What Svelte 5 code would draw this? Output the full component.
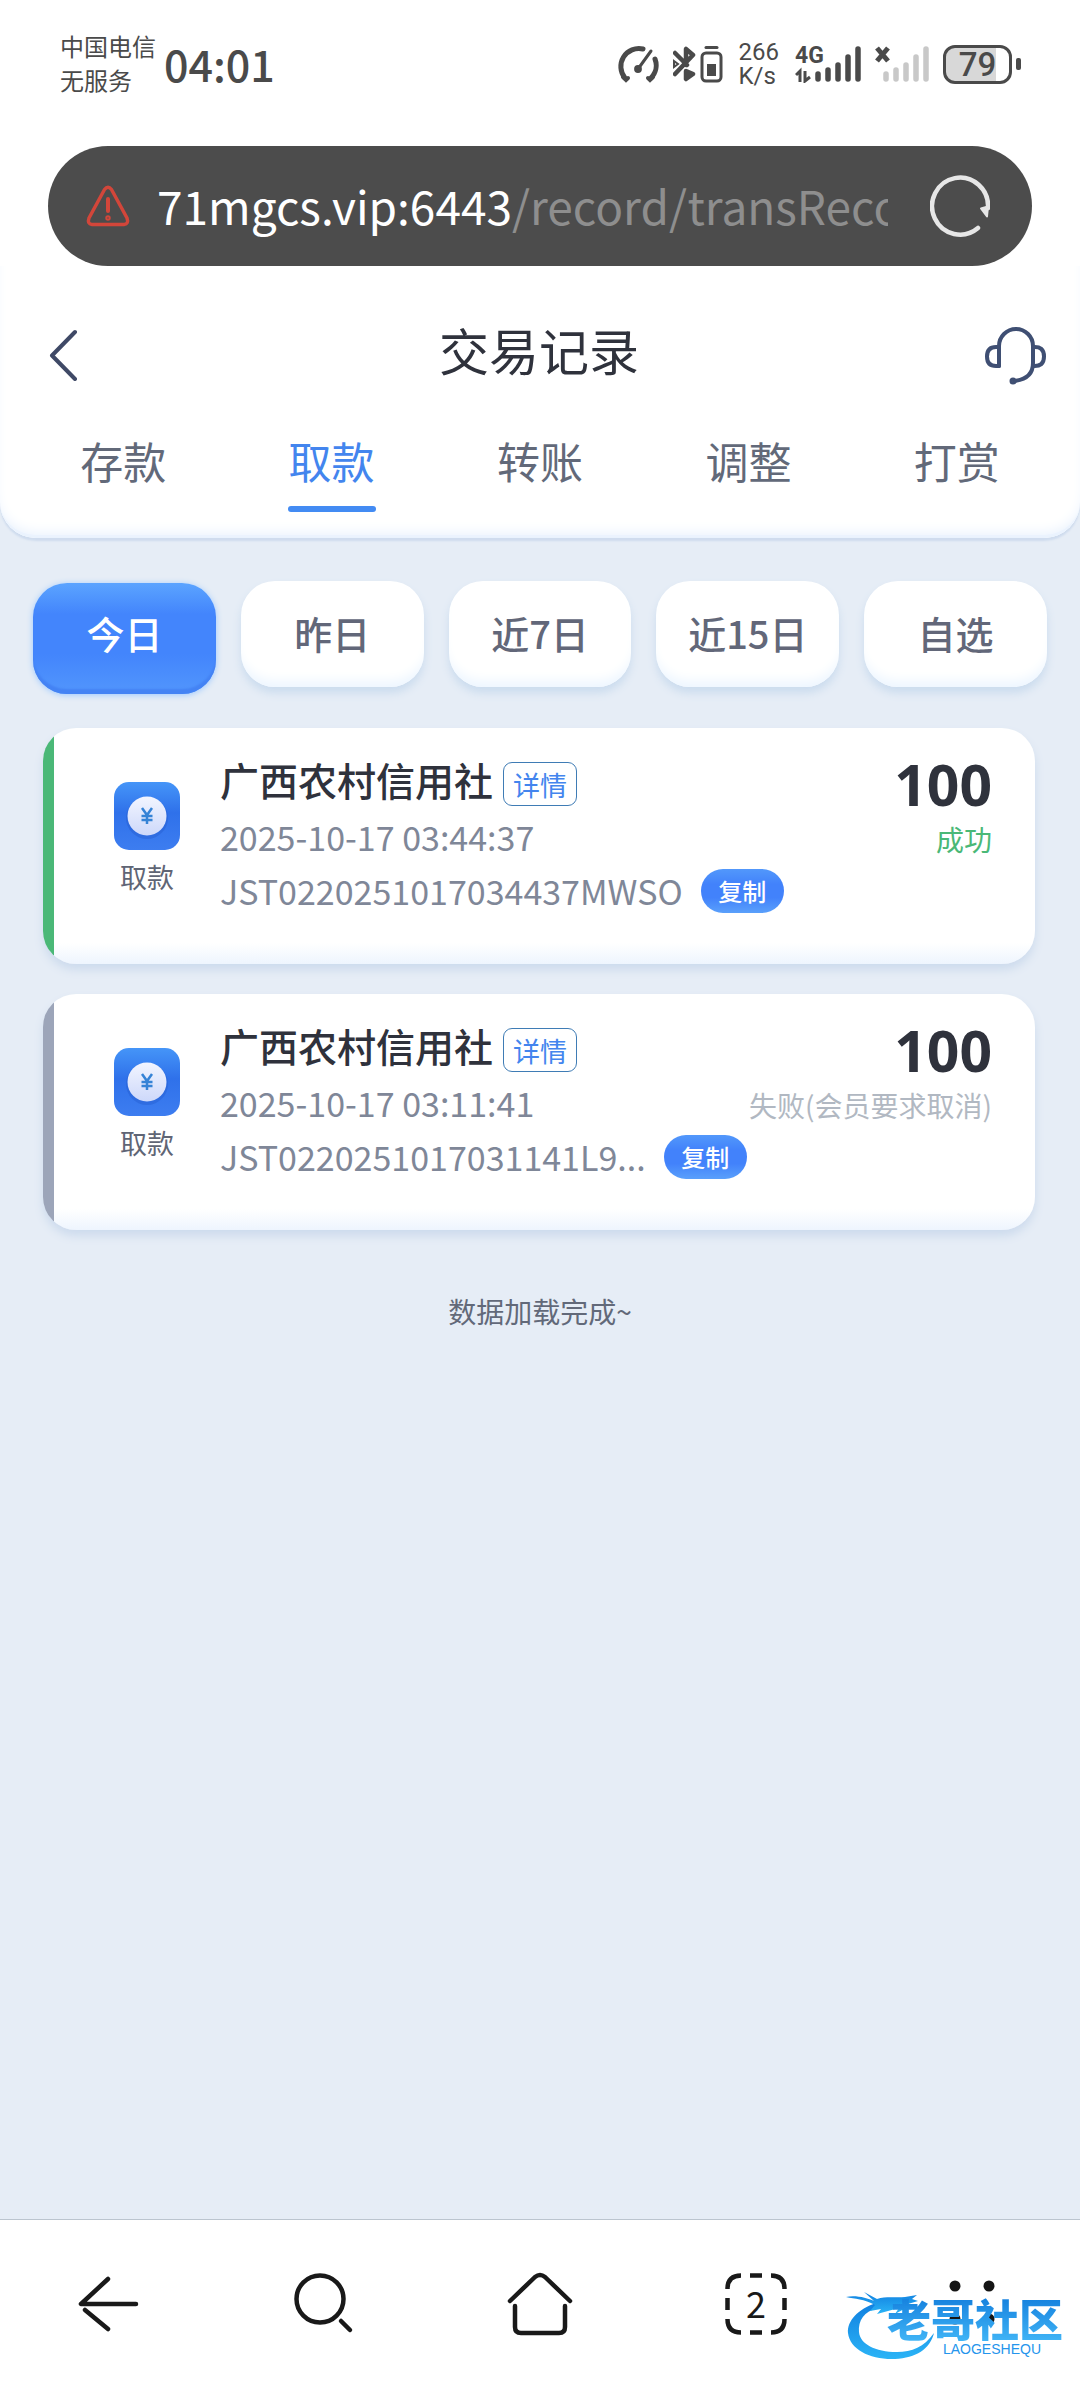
<script>
  const tabs = ['存款', '取款', '转账', '调整', '打赏'];
  const ranges = ['今日', '昨日', '近7日', '近15日', '自选'];
  const records = [
    { bank: '广西农村信用社', time: '2025-10-17 03:44:37', id: 'JST0220251017034437MWSO', amount: '100', status: '成功', ok: true },
    { bank: '广西农村信用社', time: '2025-10-17 03:11:41', id: 'JST0220251017031141L9...', amount: '100', status: '失败(会员要求取消)', ok: false }
  ];
  let tab = $state(1);
  let range = $state(0);
</script>

<div class="phone">
  <div class="status">
    <div class="carrier"><span>中国电信</span><span>无服务</span></div>
    <time class="clock">04:01</time>
    <div class="indicators">
      <svg class="gauge" width="42" height="38" viewBox="0 0 42 38" fill="none" stroke="#4a4a4a" stroke-width="5" stroke-linecap="round">
        <path d="M8 33A18 18 0 0 1 26 4" /><path d="M38 14A18 18 0 0 1 34 33" />
        <path d="M6 32l3 3 2-2M31 33l2 2 3-3" stroke-width="4" />
        <path d="M34 6L21 24" stroke-width="3" /><circle cx="21" cy="24" r="2.4" fill="#4a4a4a" stroke-width="3" />
      </svg>
      <svg class="bt" width="50" height="38" viewBox="0 0 50 38" fill="none" stroke="#4a4a4a">
        <path d="M2 8L14 20M2 29L20 10L13 4V20M13 34V26L20 29Z" stroke-width="4.500" stroke-linejoin="round" stroke-linecap="round" />
        <path d="M1 16l4 3-4 3z" stroke-width="2" />
        <rect x="29" y="8" width="19" height="28" rx="4" stroke-width="3" />
        <path d="M33 2.500h11" stroke-width="3" stroke-linecap="round" /><rect x="34" y="19" width="9" height="12" fill="#4a4a4a" stroke="none" />
      </svg>
      <div class="speed"><span>266</span><span>K/s</span></div>
      <div class="cellular">
        <span>4G</span>
        <svg width="66" height="38" viewBox="0 0 66 38" stroke="#4a4a4a" stroke-width="5.500" stroke-linecap="round" fill="none">
          <path d="M23 29v5M33 25v9M43 20v14M53 12v22M63 4v30" />
          <path d="M1 30l4-4v11M10 26v10l5-4" stroke-width="3" stroke-linecap="butt" />
        </svg>
      </div>
      <svg class="sig2" width="54" height="38" viewBox="0 0 54 38" stroke="#c8c8c8" stroke-width="5.500" stroke-linecap="round" fill="none">
        <path d="M2 3l11 13M13 3L2 16" stroke="#4a4a4a" stroke-width="5" stroke-linecap="butt" />
        <path d="M11 29v5M21 25v9M31 20v14M41 12v22M51 4v30" />
      </svg>
      <div class="battery"><span class="cell">79</span><i></i></div>
    </div>
  </div>

  <div class="address">
    <svg width="44" height="42" viewBox="0 0 44 42" fill="none" stroke="#d2463a" stroke-width="3.500" stroke-linecap="round" stroke-linejoin="round">
      <path d="M18.500 4.500Q22 0 25.500 4.500L41 33Q43 39 38 39.500H6Q1 39 3 33Z" />
      <path d="M22 14v12" stroke-width="4" /><circle cx="22" cy="33" r="1" />
    </svg>
    <div class="url"><b>71mgcs.vip:6443</b>/record/transReco</div>
    <button class="reload" aria-label="刷新">
      <svg width="60" height="62" viewBox="0 0 60 62" fill="none" stroke="#e6e6e6" stroke-width="4.500" stroke-linecap="round">
        <path d="M48 53A28 28.500 0 1 1 58 33" /><path d="M51 33.500l6 8 1-10z" fill="#e6e6e6" stroke-width="2" stroke-linejoin="round" />
      </svg>
    </button>
  </div>

  <header>
    <div class="title">
      <button aria-label="返回">
        <svg width="30" height="52" viewBox="0 0 30 52" fill="none" stroke="#3f4966" stroke-width="4" stroke-linecap="round" stroke-linejoin="round"><path d="M27 3L4 26.500L27 50" /></svg>
      </button>
      <h1>交易记录</h1>
      <button aria-label="客服">
        <svg width="62" height="60" viewBox="0 0 62 60" fill="none" stroke="#3f4f73" stroke-width="4" stroke-linejoin="round" stroke-linecap="round">
          <path d="M15 41V21A17 17 0 0 1 49 21V38Q49 54 30 56" /><path d="M15 22H12Q3 22 3 31.500T12 41H15M49 22Q60 21 60 31.500T49 41" />
          <circle cx="29" cy="56" r="1.500" />
        </svg>
      </button>
    </div>
    <nav>
      {#each tabs as t, i}
        <button class:on={tab === i} onclick={() => (tab = i)}>{t}</button>
      {/each}
    </nav>
  </header>

  <main>
    <div class="ranges">
      {#each ranges as r, i}
        <button class:on={range === i} onclick={() => (range = i)}>{r}</button>
      {/each}
    </div>
    <div class="list">
      {#each records as r}
        <article class:ok={r.ok}>
          <div class="kind">
            <svg width="66" height="68" viewBox="0 0 66 68">
              <defs>
                <linearGradient id="tile" x1="0" y1="0" x2="0" y2="1"><stop offset="0" stop-color="#4595f8" /><stop offset=".45" stop-color="#2f71ea" /><stop offset="1" stop-color="#3d7df0" /></linearGradient>
                <linearGradient id="coin" x1="0" y1="0" x2="0" y2="1"><stop offset="0" stop-color="#f2f5ff" /><stop offset="1" stop-color="#cdd8fa" /></linearGradient>
              </defs>
              <rect width="66" height="68" rx="15" fill="url(#tile)" />
              <circle cx="33" cy="36" r="21" fill="#1f57c8" opacity=".35" />
              <circle cx="33" cy="34" r="19.500" fill="url(#coin)" />
              <path d="M28 26l5 7 5-7M33 33v9M27.500 34h11M27.500 38h11" fill="none" stroke="#3583d6" stroke-width="2.500" />
            </svg>
            <span>取款</span>
          </div>
          <div class="info">
            <div class="bank"><h2>{r.bank}</h2><button>详情</button></div>
            <div class="time">{r.time}</div>
            <div class="serial"><span>{r.id}</span><button>复制</button></div>
          </div>
          <div class="sum"><strong>{r.amount}</strong><span>{r.status}</span></div>
        </article>
      {/each}
    </div>
    <p>数据加载完成~</p>
  </main>

  <footer>
    <button aria-label="后退">
      <svg width="64" height="64" viewBox="0 0 64 64" class="line"><path d="M32 7L5 32H60M9 38L32 57" /></svg>
    </button>
    <button aria-label="搜索">
      <svg width="64" height="64" viewBox="0 0 64 64" class="line"><circle cx="28" cy="27" r="23.500" /><path d="M49 49l9 9" /></svg>
    </button>
    <button aria-label="主页">
      <svg width="68" height="64" viewBox="0 0 68 64" class="line"><path d="M4 29L29 5Q34 1 39 5L64 29" /><path d="M9 34V55Q9 61 15 61H53Q59 61 59 55V34" /></svg>
    </button>
    <button class="pages" aria-label="标签页">
      <svg width="62" height="62" viewBox="0 0 62 62" class="line flat">
        <path d="M2.500 16Q2.500 2.500 16 2.500M46 2.500Q59.500 2.500 59.500 16M59.500 46Q59.500 59.500 46 59.500M16 59.500Q2.500 59.500 2.500 46M25 2.500h12M25 59.500h12M2.500 25v12M59.500 25v12" />
      </svg>
      <span>2</span>
    </button>
    <button aria-label="菜单">
      <svg width="64" height="64" viewBox="0 0 64 64" fill="#151515"><circle cx="15" cy="14" r="5.500" /><circle cx="49" cy="14" r="5.500" /><circle cx="15" cy="47" r="5.500" /><circle cx="49" cy="47" r="5.500" /></svg>
    </button>
    <div class="mark">
      <svg width="90" height="72" viewBox="0 0 90 72">
        <defs><linearGradient id="dragon" x1="0" y1="0" x2="0" y2="1"><stop offset="0" stop-color="#1180e0" /><stop offset="1" stop-color="#2bb4f6" /></linearGradient></defs>
        <g fill="url(#dragon)">
          <path d="M30 12C12 18 1 30 2 42C4 59 25 69 49 68C70 67 84 58 88 42C78 56 66 61 51 61C29 61 14 53 13 41C12 30 18 20 32 17Z" />
          <path d="M0 6C10 4 21 7 28 10L18 1L31 8C40 5 50 7 59 6L71 4L66 8L72 10L62 13L71 18L60 17L49 23L53 17L42 20L31 23L35 18L24 20L29 14C18 8 9 8 0 6Z" />
        </g>
      </svg>
      <div class="name"><strong>老哥社区</strong><small>LAOGESHEQU</small></div>
    </div>
  </footer>
</div>

<style>
  :global(body) { margin: 0; }
  .phone { display: flex; flex-direction: column; min-height: 100vh; background: #fff; font-family: "Noto Sans CJK SC", sans-serif; color: #2f323c; }
  button { border: 0; background: none; padding: 0; font: inherit; color: inherit; display: flex; align-items: center; justify-content: center; cursor: pointer; }
  h1, h2, p { margin: 0; font-weight: 400; }
  svg { display: block; flex: none; }

  .status { display: flex; align-items: center; height: 126px; margin-bottom: 20px; padding: 0 59px 0 60px; color: #4a4a4a; }
  .carrier { display: flex; flex-direction: column; font-size: 24px; line-height: 34px; }
  .clock { margin-left: 8px; font-size: 43px; line-height: 60px; font-weight: 500; }
  .indicators { display: flex; align-items: center; margin-left: auto; padding-top: 2px; }
  .bt { margin-left: 14px; }
  .speed { display: flex; flex-direction: column; margin: 0 16px 0 16px; font: 400 24px/24px Roboto, sans-serif; }
  .cellular { display: grid; }
  .cellular > * { grid-area: 1 / 1; }
  .cellular span { font: 700 23px/22px Roboto, sans-serif; }
  .sig2 { margin: 0 14px; }
  .battery { display: flex; align-items: center; gap: 4px; }
  .cell { box-sizing: border-box; width: 69px; height: 39px; border: 3px solid #4a4a4a; border-radius: 12px; background: linear-gradient(90deg, #d8d8d8 79%, #fff 79%); font: 500 33px/34px Roboto, sans-serif; text-align: center; }
  .battery i { width: 5px; height: 12px; border-radius: 2px; background: #4a4a4a; }

  .address { display: flex; align-items: center; height: 120px; margin: 0 48px; padding: 0 42px 0 38px; border-radius: 60px; background: #4c4c4c; }
  .url { flex: 1; min-width: 0; margin: 0 42px 2px 27px; overflow: hidden; white-space: nowrap; font-size: 46px; line-height: 72px; color: #8e8e8e; }
  .url b { font-weight: 400; color: #fff; }

  header { position: relative; height: 272px; border-radius: 0 0 36px 36px; background: #fff; box-shadow: inset 0 -10px 14px -6px #e6f0fd, inset 0 -4px 0 -1px #f3f8ff, 0 3px 2px #cfdcee; z-index: 1; clip-path: inset(0 0 -8px 0); }
  .title { display: flex; align-items: center; justify-content: space-between; padding: 54px 34px 0 48px; height: 70px; }
  .title h1 { padding: 0 0 12px 16px; font-size: 50px; line-height: 58px; }
  nav { display: grid; grid-template-columns: repeat(5, 1fr); padding: 32px 19px 0; }
  nav button { position: relative; font-size: 43px; line-height: 76px; color: #626979; }
  nav button.on { color: #4385ee; }
  nav button.on::after { content: ""; position: absolute; bottom: -14px; width: 88px; height: 6px; border-radius: 3px; background: #438bf3; }

  main { flex: 1; margin-top: -40px; padding-top: 83px; background: #e6edf6; }
  .ranges { display: grid; grid-template-columns: repeat(5, 1fr); align-items: start; gap: 25px; padding: 0 33px; }
  .ranges button { box-sizing: border-box; height: 106px; padding-bottom: 4px; border-radius: 34px; background: #fff; box-shadow: inset 0 -12px 12px -6px #edf6ff, 0 6px 8px #cbdcee; color: #626779; font-size: 38px; font-weight: 500; }
  .ranges button.on { height: 111px; margin-top: 2px; padding-bottom: 12px; background: linear-gradient(#5ba4ff, #4385fc 28%, #4385fc 64%, #5296fc); box-shadow: inset 0 -5px 2px #4483f4, 0 1px 6px #9cc8ff; color: #fff; }
  .list { display: grid; gap: 30px; padding: 34px 45px 0 43px; }
  article { box-sizing: border-box; display: flex; min-height: 236px; padding: 24px 43px 0 71px; border-radius: 33px; background: linear-gradient(90deg, #9ca5b9 11px, transparent 11px), linear-gradient(#fff 91%, #eef5fe); box-shadow: 0 6px 10px #cddbed; }
  article.ok { background: linear-gradient(90deg, #4ab877 11px, transparent 11px), linear-gradient(#fff 91%, #eef5fe); }
  .kind { display: flex; flex-direction: column; align-items: center; gap: 10px; padding-top: 30px; font-size: 27px; line-height: 34px; color: #5f6575; }
  .info { flex: 1; display: flex; flex-direction: column; gap: 4px; margin-left: 40px; white-space: nowrap; }
  .bank, .serial { display: flex; align-items: flex-end; }
  .bank h2 { font-size: 39px; line-height: 54px; font-weight: 500; }
  .bank button { box-sizing: border-box; width: 74px; height: 44px; margin-left: 10px; border: 1px solid #3f7cb5; border-radius: 9px; font-size: 27px; color: #4385ee; }
  .time { font-size: 34px; line-height: 54px; color: #7f8798; }
  .serial { align-items: center; font-size: 34px; line-height: 46px; color: #7f8798; }
  .serial button { width: 83px; height: 44px; margin-left: 18px; border-radius: 22px; background: linear-gradient(#5298fb, #4282fb 35%, #4282fb 65%, #5aa0fb); color: #fff; font-size: 24px; font-weight: 500; }
  .sum { display: flex; flex-direction: column; align-items: flex-end; margin-left: -240px; font-size: 28px; line-height: 46px; color: #b1b8c2; }
  .sum strong { font: 700 57px/64px "Noto Sans", sans-serif; color: #2f323c; }
  .ok .sum span { color: #4ab877; }
  p { padding: 60px 0; text-align: center; font-size: 28px; line-height: 42px; color: #626979; }

  footer { position: relative; display: grid; grid-template-columns: repeat(5, 1fr); align-items: center; height: 168px; border-top: 1px solid #bcc5cf; background: #fff; }
  .line { fill: none; stroke: #191919; stroke-width: 4.5; stroke-linecap: round; stroke-linejoin: round; }
  .flat { stroke-linecap: butt; }
  .pages { display: grid; place-items: center; }
  .pages > * { grid-area: 1 / 1; }
  .pages span { padding-bottom: 4px; font-size: 36px; line-height: 40px; color: #191919; }
  .mark { position: absolute; right: 17px; bottom: 25px; display: flex; align-items: flex-end; color: #2595ec; }
  .name { display: flex; flex-direction: column; align-items: flex-end; padding-bottom: 6px; margin-left: -49px; }
  .name strong { font-size: 44px; line-height: 45px; font-weight: 900; background: linear-gradient(#147fdd, #40b4f6); background-clip: text; color: transparent; }
  .name small { padding-right: 22px; font: 14px/16px "Liberation Sans", sans-serif; }
</style>
